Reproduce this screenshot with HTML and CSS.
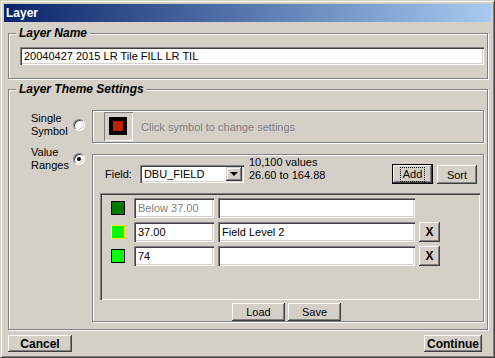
FILE: index.html
```html
<!DOCTYPE html>
<html lang="en">
<head>
  <meta charset="UTF-8">
  <title>Layer</title>
  <link rel="stylesheet" href="styles.css">
</head>
<body>

  <div class="window">
    <div class="titlebar">Layer</div>

    <div class="content">
      <div class="group name-group">
        <span class="legend">Layer Name</span>
        <div class="edit name-edit">20040427 2015 LR Tile FILL LR TIL</div>
      </div>

      <div class="group theme-group">
        <span class="legend">Layer Theme Settings</span>

        <div class="options">
          <div class="option">
            <span class="opt-label">Single<br>Symbol</span>
            <span class="radio"></span>
          </div>
          <div class="option">
            <span class="opt-label">Value<br>Ranges</span>
            <span class="radio checked"></span>
          </div>
        </div>

        <div class="panels">
          <div class="panel symbol-panel">
            <div class="symbol-btn"><span class="symbol"></span></div>
            <span class="hint">Click symbol to change settings</span>
          </div>

          <div class="panel ranges-panel">
            <div class="field-row">
              <span class="field-label">Field:</span>
              <div class="combo">
                <span class="combo-text">DBU_FIELD</span>
                <span class="combo-btn"><span class="arrow"></span></span>
              </div>
              <div class="stats">10,100 values<br>26.60 to 164.88</div>
              <button class="btn add-btn"><span class="focus">Add</span></button>
              <button class="btn sort-btn">Sort</button>
            </div>

            <div class="list">
              <div class="range-row">
                <span class="swatch dark"></span>
                <div class="edit value-edit muted">Below 37.00</div>
                <div class="edit label-edit"></div>
              </div>
              <div class="range-row">
                <span class="swatch lime selected"></span>
                <div class="edit value-edit">37.00</div>
                <div class="edit label-edit">Field Level 2</div>
                <button class="btn del-btn">X</button>
              </div>
              <div class="range-row">
                <span class="swatch lime"></span>
                <div class="edit value-edit">74</div>
                <div class="edit label-edit"></div>
                <button class="btn del-btn">X</button>
              </div>
            </div>

            <div class="file-row">
              <button class="btn file-btn">Load</button>
              <button class="btn file-btn">Save</button>
            </div>
          </div>
        </div>
      </div>

      <div class="footer">
        <button class="btn big-btn">Cancel</button>
        <button class="btn big-btn">Continue</button>
      </div>
    </div>
  </div>

</body>
</html>
```

FILE: styles.css
```css
body {
  margin: 0;
  padding: 0;
  background-color: #d4d0c8;
  font-family: "Liberation Sans", Arial, sans-serif;
  font-size: 11px;
  color: #000;
}

.window {
  width: 495px;
  height: 358px;
  box-sizing: border-box;
  border: 1px solid;
  border-color: #d4d0c8 #404040 #404040 #d4d0c8;
  box-shadow: inset 1px 1px #fff, inset -1px -1px #808080;
  padding: 3px;
  background-color: #d4d0c8;
}

.titlebar {
  height: 18px;
  line-height: 18px;
  padding-left: 2px;
  background: linear-gradient(to right, #0a246a, #a6caf0);
  color: #fff;
  font-weight: bold;
  font-size: 12px;
}

.content {
  padding: 0 3px 0 4px;
}

/* etched group boxes */
.group,
.panel {
  position: relative;
  box-sizing: border-box;
  border: 1px solid #808080;
  box-shadow: inset 1px 1px #fff, 1px 1px #fff;
}

.legend {
  position: absolute;
  top: -8px;
  left: 7px;
  padding: 0 3px;
  background-color: #d4d0c8;
  font-size: 12px;
  font-weight: bold;
  font-style: italic;
  line-height: 14px;
}

.name-group {
  margin-top: 11px;
  height: 46px;
  padding: 13px 3px 0 11px;
}

.theme-group {
  margin-top: 10px;
  height: 241px;
  display: flex;
}

/* sunken edit boxes */
.edit {
  box-sizing: border-box;
  background-color: #fff;
  box-shadow: inset 1px 1px #808080, inset 2px 2px #404040,
    inset -1px -1px #fff, inset -2px -2px #d4d0c8;
  padding-left: 4px;
  white-space: nowrap;
  overflow: hidden;
}

.name-edit {
  height: 18px;
  line-height: 18px;
}

.options {
  margin: 22px 0 0 22px;
  width: 61px;
  display: flex;
  flex-direction: column;
  gap: 8px;
}

.option {
  display: flex;
  align-items: center;
}

.opt-label {
  width: 42px;
  line-height: 13px;
}

.radio {
  width: 12px;
  height: 12px;
  box-sizing: border-box;
  border-radius: 50%;
  border: 1px solid;
  border-color: #808080 #fff #fff #808080;
  box-shadow: inset 1px 1px #404040, inset -1px -1px #d4d0c8;
  background-color: #fff;
  display: flex;
  align-items: center;
  justify-content: center;
}

.radio.checked::after {
  content: "";
  width: 4px;
  height: 4px;
  border-radius: 50%;
  background-color: #000;
}

.panels {
  margin-top: 20px;
  width: 392px;
  display: flex;
  flex-direction: column;
  gap: 11px;
}

.symbol-panel {
  height: 33px;
  display: flex;
  align-items: center;
  padding-left: 11px;
}

.symbol-btn {
  width: 29px;
  height: 29px;
  box-sizing: border-box;
  box-shadow: inset 1px 1px #808080, inset -1px -1px #fff;
  padding: 5px 0 0 5px;
}

.symbol {
  display: flex;
  align-items: center;
  justify-content: center;
  width: 18px;
  height: 18px;
  background-color: #000;
}

.symbol::after {
  content: "";
  width: 10px;
  height: 10px;
  background-color: #c02000;
}

.hint {
  margin-left: 8px;
  color: #808080;
}

.ranges-panel {
  height: 168px;
  padding-top: 1px;
}

.field-row {
  height: 28px;
  display: flex;
  align-items: flex-end;
  padding: 0 6px 0 12px;
}

.field-label {
  line-height: 18px;
  margin-bottom: 1px;
}

.combo {
  margin: 0 0 1px 8px;
  width: 104px;
  height: 18px;
  box-sizing: border-box;
  display: flex;
  align-items: center;
  padding: 2px 2px 2px 4px;
  background-color: #fff;
  box-shadow: inset 1px 1px #808080, inset 2px 2px #404040,
    inset -1px -1px #fff, inset -2px -2px #d4d0c8;
}

.combo-text {
  flex: 1;
  line-height: 14px;
}

.combo-btn {
  width: 16px;
  height: 14px;
  box-sizing: border-box;
  background-color: #d4d0c8;
  box-shadow: inset -1px -1px #404040, inset 1px 1px #d4d0c8,
    inset -2px -2px #808080, inset 2px 2px #fff;
  display: flex;
  align-items: center;
  justify-content: center;
}

.arrow {
  width: 0;
  height: 0;
  border-left: 4px solid transparent;
  border-right: 4px solid transparent;
  border-top: 4px solid #000;
}

.stats {
  margin: 0 0 2px 5px;
  line-height: 13px;
}

/* raised buttons */
.btn {
  font-family: "Liberation Sans", Arial, sans-serif;
  font-size: 11px;
  color: #000;
  background-color: #d4d0c8;
  border: none;
  padding: 0;
  box-sizing: border-box;
  box-shadow: inset -1px -1px #404040, inset 1px 1px #fff,
    inset -2px -2px #808080;
}

.add-btn {
  margin-left: auto;
  width: 41px;
  height: 20px;
  border: 1px solid #000;
  display: flex;
  align-items: center;
  justify-content: center;
}

.focus {
  padding: 0 2px;
  line-height: 13px;
  outline: 1px dotted #000;
}

.sort-btn {
  margin-left: 4px;
  width: 40px;
  height: 19px;
}

.list {
  margin: 9px 3px 0 7px;
  height: 107px;
  box-sizing: border-box;
  box-shadow: inset 1px 1px #808080, inset 2px 2px #404040,
    inset -1px -1px #fff, inset -2px -2px #d4d0c8;
  padding: 5px 0 0 11px;
  display: flex;
  flex-direction: column;
  gap: 4px;
}

.range-row {
  display: flex;
  align-items: center;
  gap: 4px;
}

.swatch {
  width: 14px;
  height: 14px;
  box-sizing: border-box;
  border: 1px solid #000;
  margin-right: 5px;
}

.swatch.dark {
  background-color: #007a00;
}

.swatch.lime {
  background-color: #00ff00;
}

.swatch.selected {
  border-color: #ffff00;
}

.value-edit,
.label-edit {
  height: 20px;
  line-height: 20px;
}

.value-edit {
  width: 80px;
}

.label-edit {
  width: 197px;
}

.muted {
  color: #808080;
}

.del-btn {
  width: 21px;
  height: 20px;
  font-size: 12px;
  font-weight: bold;
}

.file-row {
  margin-top: 3px;
  display: flex;
  justify-content: center;
  gap: 3px;
  padding-right: 3px;
}

.file-btn {
  width: 53px;
  height: 18px;
}

.footer {
  margin-top: 5px;
  display: flex;
  justify-content: space-between;
  padding-right: 6px;
}

.big-btn {
  height: 17px;
  font-size: 12px;
  font-weight: bold;
}

.big-btn:first-child {
  width: 64px;
}

.big-btn:last-child {
  width: 58px;
}
```
